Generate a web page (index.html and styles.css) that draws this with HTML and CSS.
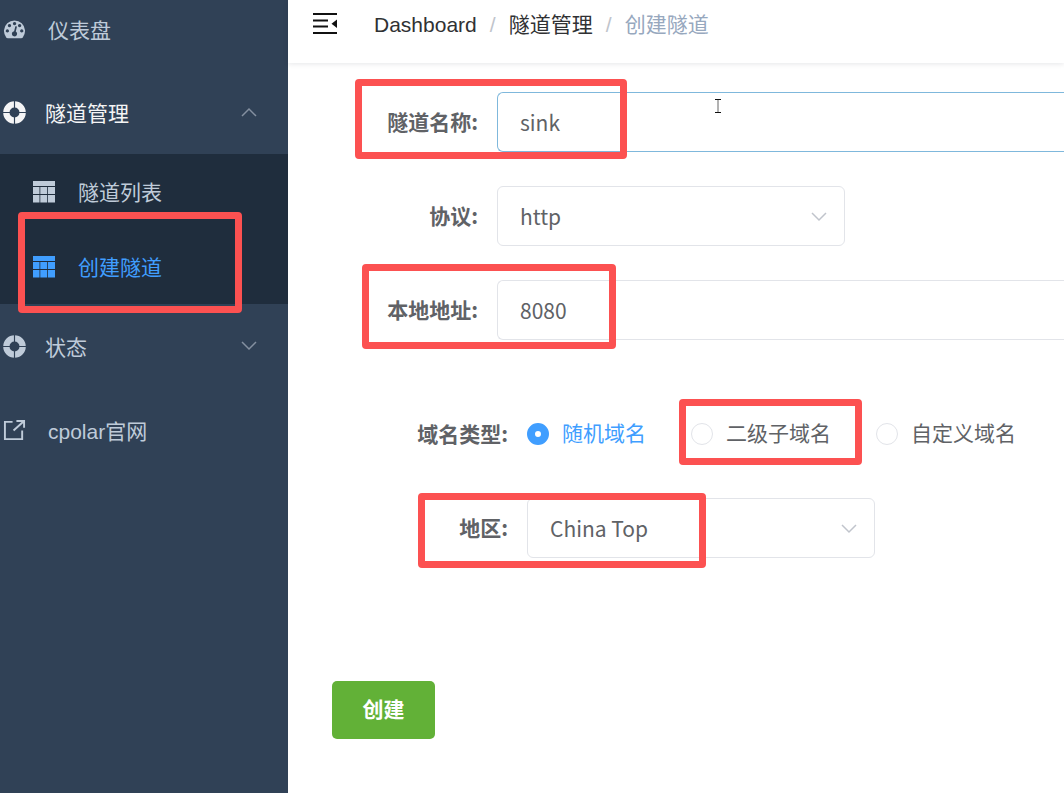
FILE: index.html
```html
<!DOCTYPE html>
<html lang="zh-CN">
<head>
<meta charset="utf-8">
<title>创建隧道</title>
<link rel="stylesheet" href="styles.css">
</head>
<body>
<svg class="sprite" aria-hidden="true">
  <symbol id="ring" viewBox="0 0 24 24">
    <circle cx="12" cy="12" r="8.500" fill="none" stroke="currentColor" stroke-width="6.600"/>
    <path class="ring-gap" d="M12 0v8M12 16v8M0 12h8M16 12h8"/>
  </symbol>
  <symbol id="table" viewBox="0 0 22 22">
    <path fill="currentColor" d="M0 0h22v5H0zM0 6h6.500v7H0zM7.300 6h6.900v7H7.300zM15 6h7v7h-7zM0 14h6.500v7.500H0zM7.300 14h6.900v7.500H7.300zM15 14h7v7.500h-7z"/>
  </symbol>
  <symbol id="down" viewBox="0 0 16 10">
    <path d="M1 1l7 7 7-7" fill="none" stroke="currentColor" stroke-width="1.500"/>
  </symbol>
</svg>
<div class="app">
  <nav class="sidebar">
    <a class="item first" href="#dashboard">
      <svg class="icon" viewBox="0 0 24 24"><path fill="currentColor" fill-rule="evenodd" d="M3.500 20.500A11 11 0 1 1 20.500 20.500Q20 21 19 21H5Q4 21 3.500 20.500ZM12 4.100a1.700 1.700 0 1 0 .1 0zM6.700 6.200a1.700 1.700 0 1 0 .1 0zM17.300 6.200a1.700 1.700 0 1 0 .1 0zM4.500 11.800a1.700 1.700 0 1 0 .1 0zM19.500 11.800a1.700 1.700 0 1 0 .1 0zM12.900 8.500l-1.300 5.300a2.700 2.700 0 1 0 1.700.3l1.300-5.300z"/></svg>
      <span class="text wide">仪表盘</span>
    </a>
    <button class="item open" type="button" aria-expanded="true">
      <svg class="icon"><use href="#ring"/></svg>
      <span class="text">隧道管理</span>
      <svg class="arrow up"><use href="#down"/></svg>
    </button>
    <div class="submenu">
      <a class="subitem" href="#list"><svg class="table-icon"><use href="#table"/></svg><span class="subtext">隧道列表</span></a>
      <a class="subitem active" href="#create"><svg class="table-icon"><use href="#table"/></svg><span class="subtext">创建隧道</span><i class="mark mark-menu"></i></a>
    </div>
    <button class="item" type="button" aria-expanded="false">
      <svg class="icon"><use href="#ring"/></svg>
      <span class="text">状态</span>
      <svg class="arrow"><use href="#down"/></svg>
    </button>
    <a class="item" href="#site">
      <svg class="icon" viewBox="0 0 24 24"><path d="M10 3H2V21H20V12M14 2H22V9M22 2L11 12" fill="none" stroke="currentColor" stroke-width="2"/></svg>
      <span class="text wide">cpolar官网</span>
    </a>
  </nav>
  <main class="main">
    <header class="topbar">
      <button class="fold" type="button" aria-label="收起菜单">
        <svg viewBox="0 0 24 22"><path d="M0 1h24M0 7.500h15M0 13.500h15M0 20h24" fill="none" stroke="currentColor" stroke-width="2.200"/><path d="M24 6.500v8.500l-5.500-4.200z" fill="currentColor"/></svg>
      </button>
      <div class="crumbs">
        <a href="#dashboard">Dashboard</a><span class="sep">/</span><a href="#tunnels">隧道管理</a><span class="sep">/</span><span class="current">创建隧道</span>
      </div>
    </header>
    <form class="form">
      <div class="row">
        <label for="name">隧道名称:</label>
        <input class="field long focused" id="name" type="text" value="sink">
        <i class="mark mark-name"></i>
        <svg class="caret" viewBox="0 0 8 14"><path d="M1 .5h6M1 13.500h6" stroke="#111"/><path d="M4 1v12" stroke="#666"/></svg>
      </div>
      <div class="row">
        <label for="proto">协议:</label>
        <div class="select"><select class="field" id="proto"><option>http</option></select><svg class="chevron"><use href="#down"/></svg></div>
      </div>
      <div class="row">
        <label for="addr">本地地址:</label>
        <input class="field long" id="addr" type="text" value="8080">
        <i class="mark mark-addr"></i>
      </div>
      <fieldset class="nested">
        <div class="row" role="radiogroup" aria-labelledby="domain">
          <span class="label" id="domain">域名类型:</span>
          <div class="radios">
            <label class="radio"><input type="radio" name="domain" checked><span>随机域名</span></label>
            <label class="radio"><input type="radio" name="domain"><span>二级子域名</span><i class="mark mark-radio"></i></label>
            <label class="radio"><input type="radio" name="domain"><span>自定义域名</span></label>
          </div>
        </div>
        <div class="row">
          <label for="region">地区:</label>
          <div class="select"><select class="field" id="region"><option>China Top</option></select><svg class="chevron"><use href="#down"/></svg></div>
          <i class="mark mark-region"></i>
        </div>
      </fieldset>
      <button class="submit" type="submit">创建</button>
    </form>
  </main>
</div>
</body>
</html>
```
FILE: styles.css
```css
* { box-sizing: border-box; }
body {
  margin: 0;
  font: 21px/30px "Liberation Sans", "Noto Sans CJK SC", sans-serif;
  color: #606266;
  background: #fff;
}
a { color: inherit; text-decoration: none; }
button { font: inherit; border: 0; background: none; cursor: pointer; }
.sprite { position: absolute; width: 0; height: 0; }
.app { display: flex; min-height: 100vh; overflow: hidden; }

.sidebar { flex: 0 0 288px; background: #304156; color: #bfcbd9; }
.item {
  display: flex;
  align-items: center;
  width: 100%;
  height: 84px;
  padding: 0 31px 0 3px;
  color: #bfcbd9;
  text-align: left;
}
.first { height: 70px; padding-bottom: 12px; }
.open { color: #f4f4f5; }
.icon { flex: none; width: 23px; height: 23px; }
.ring-gap { stroke: #304156; stroke-width: 1.2; }
.text { flex: 1; padding: 3px 0 0 19px; }
.wide { padding-left: 22px; }
.arrow { width: 16px; height: 10px; color: #8490a0; }
.up { transform: rotate(180deg); }
.submenu { background: #1f2d3d; }
.subitem {
  position: relative;
  display: flex;
  align-items: center;
  gap: 23px;
  height: 75px;
  padding-left: 33px;
}
.subtext { padding-top: 3px; }
.active { color: #409eff; }
.table-icon { width: 22px; height: 22px; }

.main { flex: 1; min-width: 0; }
.topbar {
  display: flex;
  align-items: center;
  gap: 37px;
  height: 63px;
  padding: 0 25px 16px;
  box-shadow: 0 1px 5px rgba(0, 21, 41, 0.1);
}
.fold { display: flex; padding: 0; color: #111; }
.fold svg { width: 24px; height: 22px; }
.crumbs { display: flex; padding-top: 2px; white-space: nowrap; color: #303133; }
.sep { width: 32px; text-align: center; color: #c0c4cc; }
.current { color: #97a8be; }

.form { padding: 29px 0 0 44px; }
.row {
  position: relative;
  display: flex;
  align-items: center;
  height: 60px;
  margin-bottom: 34px;
}
.row > label, .label {
  flex: 0 0 165px;
  padding: 0 19px 2px 0;
  text-align: right;
  font-family: "Noto Sans CJK SC", sans-serif;
  font-weight: 700;
  white-space: nowrap;
}
.field {
  width: 100%;
  height: 60px;
  padding: 0 22px;
  border: 1px solid #e2e4e9;
  border-radius: 6px;
  outline: 0;
  background: #fff;
  color: #606266;
  font: 21px/30px "Noto Sans CJK SC", sans-serif;
  appearance: none;
}
.long { flex: 1; min-width: 0; border-right: 0; border-radius: 6px 0 0 6px; }
.focused { border-color: #7fb8dc; }
.select { position: relative; flex: 0 1 348px; }
.chevron {
  position: absolute;
  top: 26px;
  right: 18px;
  width: 16px;
  height: 10px;
  color: #c0c4cc;
  pointer-events: none;
}
.nested { margin: 0; padding: 30px 0 0 30px; border: 0; min-width: 0; }
.radios { display: flex; gap: 45px; white-space: nowrap; }
.radio { position: relative; display: flex; align-items: center; gap: 13px; }
.radio input {
  appearance: none;
  width: 22px;
  height: 22px;
  margin: 0;
  border: 1px solid #e2e4e9;
  border-radius: 50%;
}
.radio input:checked { border: 8px solid #409eff; }
.radio input:checked + span { color: #409eff; }
.submit {
  width: 103px;
  height: 58px;
  margin-top: 89px;
  border-radius: 5px;
  background: #62b137;
  color: #fff;
  font-weight: 600;
}

.mark {
  position: absolute;
  border: 7px solid #fc5151;
  border-radius: 4px;
  pointer-events: none;
}
.mark-menu { left: 18px; top: -17px; width: 224px; height: 101px; }
.mark-name { left: 23px; top: -13px; width: 272px; height: 80px; }
.mark-addr { left: 30px; top: -16px; width: 254px; height: 85px; }
.mark-radio { left: -12px; top: -20px; width: 183px; height: 66px; }
.mark-region { left: 56px; top: -5px; width: 288px; height: 75px; }
.caret { position: absolute; left: 382px; top: 7px; width: 8px; height: 14px; }
```
